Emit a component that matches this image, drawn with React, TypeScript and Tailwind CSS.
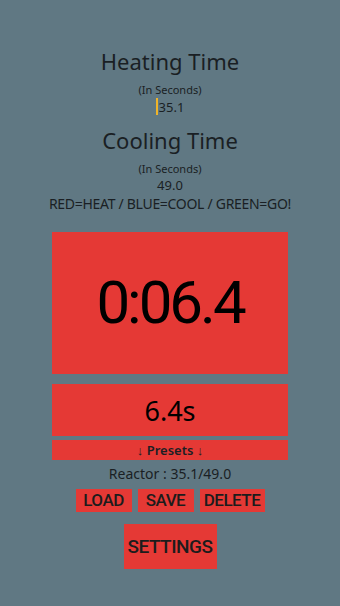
const red = 'bg-[#e53935]';

function Field({ title, value, cursor }: { title: string; value: string; cursor?: boolean }) {
  return (
    <div className="flex flex-col items-center text-[#1a1f24]">
      <div className="text-[22px] leading-[30px]">{title}</div>
      <div className="mt-[7px] text-[11px] leading-[14px]">(In Seconds)</div>
      <div className="mt-[1px] flex items-center text-[13px] leading-[16px]">
        {cursor && <span className="mr-[1px] inline-block h-[17px] w-[2px] bg-[#f0b429]" />}
        {value}
      </div>
    </div>
  );
}

export default function App() {
  return (
    <div
      className="flex h-[606px] w-[340px] flex-col items-center bg-[#607883] pt-[46px]"
      style={{ fontFamily: '"Noto Sans", "Open Sans", sans-serif' }}
    >
      <Field title="Heating Time" value="35.1" cursor />
      <div className="mt-[10px]">
        <Field title="Cooling Time" value="49.0" />
      </div>
      <div className="mt-[3px] text-[14px] leading-[16px] tracking-[-0.3px] text-[#1a1f24]">
        RED=HEAT / BLUE=COOL / GREEN=GO!
      </div>

      <div className={`mt-[20px] flex h-[142px] w-[236px] items-center justify-center ${red}`}>
        <span
          className="text-[60px] leading-none tracking-[-3px] text-black"
          style={{ fontFamily: 'Roboto, sans-serif' }}
        >
          0:06.4
        </span>
      </div>
      <div className={`mt-[10px] flex h-[52px] w-[236px] items-center justify-center ${red}`}>
        <span className="text-[27px] leading-none text-black">6.4s</span>
      </div>
      <div className={`mt-[4px] flex h-[20px] w-[236px] items-center justify-center ${red}`}>
        <span className="text-[13px] font-semibold leading-none text-[#1a1f24]">↓ Presets ↓</span>
      </div>
      <div className="mt-[5px] text-[14px] leading-[18px] text-[#1a1f24]">Reactor : 35.1/49.0</div>

      <div className="mt-[6px] flex gap-[6px]" style={{ fontFamily: 'Roboto, sans-serif' }}>
        {[
          { label: 'LOAD', w: 'w-[56px]' },
          { label: 'SAVE', w: 'w-[56px]' },
          { label: 'DELETE', w: 'w-[65px]' },
        ].map((b) => (
          <button
            key={b.label}
            className={`flex h-[23px] items-center justify-center text-[17px] font-medium leading-none tracking-[-0.5px] text-[#1c1c1c] ${b.w} ${red}`}
          >
            {b.label}
          </button>
        ))}
      </div>
      <button
        className={`mt-[12px] flex h-[45px] w-[93px] items-center justify-center text-[19px] font-medium leading-none tracking-[-0.5px] text-[#1c1c1c] ${red}`}
        style={{ fontFamily: 'Roboto, sans-serif' }}
      >
        SETTINGS
      </button>
    </div>
  );
}
